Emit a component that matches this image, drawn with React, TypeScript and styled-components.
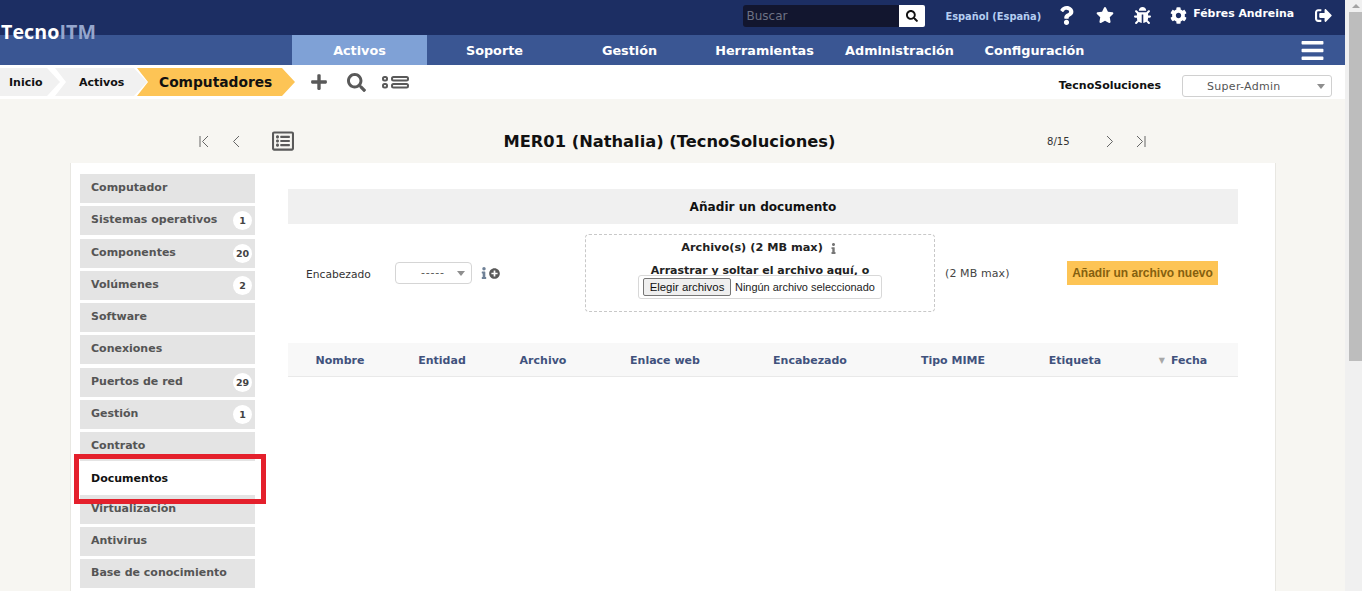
import React from "react";
import styled, { createGlobalStyle } from "styled-components";
import { FaQuestion, FaStar, FaBug, FaCog, FaSignOutAlt, FaBars, FaPlus, FaSearch, FaInfo, FaPlusCircle, FaRegListAlt } from "react-icons/fa";

const Global = createGlobalStyle`
  html, body { margin: 0; padding: 0; height: 100%; overflow: hidden; }
  body { font-family: "DejaVu Sans", Verdana, sans-serif; background: #f7f6f2; }
  #root { height: 100%; }
`;

const Shell = styled.div`
  display: flex;
  width: 1362px;
  height: 591px;
  overflow: hidden;
  position: relative;
`;
const Page = styled.div`
  width: 1345px;
  flex: none;
  display: flex;
  flex-direction: column;
  background: #f7f6f2;
`;
const ScrollTrack = styled.div`
  width: 17px;
  flex: none;
  background: #f0f0f0;
  display: flex;
  flex-direction: column;
  align-items: flex-end;
`;
const ScrollArrow = styled.div`
  height: 12px;
  width: 13px;
  display: flex;
  align-items: center;
  justify-content: center;
  &::before {
    content: "";
    border-left: 4px solid transparent;
    border-right: 4px solid transparent;
    border-bottom: 4px solid #a3a3a3;
  }
`;
const ScrollThumb = styled.div`
  width: 13px;
  height: 349px;
  background: #bdbdbd;
`;

const TopBar = styled.header`
  height: 35px;
  background: #1c2e63;
  display: flex;
  align-items: center;
  justify-content: flex-end;
  color: #fff;
  padding-right: 13px;
`;
const SearchBox = styled.div`
  display: flex;
  width: 182px;
  height: 22px;
  margin-right: 20px;
  margin-top: -3px;
`;
const SearchInput = styled.div`
  flex: 1;
  background: #12162f;
  color: #6d7284;
  font-size: 12px;
  line-height: 22px;
  padding-left: 3px;
  border-radius: 3px 0 0 3px;
`;
const SearchButton = styled.div`
  width: 26px;
  flex: none;
  background: #fff;
  color: #111;
  display: flex;
  align-items: center;
  justify-content: center;
  font-size: 12px;
  border-radius: 0 2px 2px 0;
`;
const Lang = styled.span`
  font-size: 9.85px;
  font-weight: 700;
  color: #b4cdf1;
  margin-right: 16px;
  white-space: nowrap;
  margin-top: -3px;
`;
const TopIcon = styled.span<{ $mr: number; $size: number }>`
  display: inline-flex;
  font-size: ${(p) => p.$size}px;
  margin-right: ${(p) => p.$mr}px;
  margin-top: -5px;
  color: #fff;
`;
const UserName = styled.span`
  font-size: 10.9px;
  font-weight: 700;
  margin-right: 21px;
  margin-top: -9px;
  white-space: nowrap;
`;

const NavBar = styled.nav`
  height: 30px;
  background: #3a5693;
  display: flex;
  padding-left: 292px;
  padding-right: 20px;
  position: relative;
`;
const NavItem = styled.div<{ $active?: boolean }>`
  width: 135px;
  flex: none;
  text-align: center;
  line-height: 31px;
  font-size: 12.8px;
  font-weight: 700;
  color: #fff;
  background: ${(p) => (p.$active ? "#7fa1d6" : "transparent")};
  white-space: nowrap;
`;
const Burger = styled.div`
  margin-left: auto;
  color: #fff;
  font-size: 25px;
  display: flex;
  align-items: center;
`;
const Logo = styled.div`
  position: absolute;
  left: 1px;
  top: -14px;
  font-family: "Open Sans", sans-serif;
  font-size: 19.6px;
  font-weight: 700;
  line-height: 22px;
  color: #fff;
  letter-spacing: 0.1px;
  & > span { color: #95a6cd; }
`;

const CrumbBar = styled.div`
  height: 34px;
  background: #fff;
  display: flex;
  align-items: flex-start;
  padding-top: 3px;
  box-sizing: border-box;
`;
const Crumb = styled.div<{ $w: number; $overlap: number; $first?: boolean; $current?: boolean }>`
  width: ${(p) => p.$w}px;
  height: 28px;
  flex: none;
  margin-right: ${(p) => -p.$overlap}px;
  background: ${(p) => (p.$current ? "#fdc455" : "#f1f1f1")};
  clip-path: ${(p) =>
    p.$first
      ? "polygon(0 0, calc(100% - 13px) 0, 100% 50%, calc(100% - 13px) 100%, 0 100%)"
      : "polygon(0 0, calc(100% - 13px) 0, 100% 50%, calc(100% - 13px) 100%, 0 100%, 11px 50%)"};
  display: flex;
  align-items: center;
  padding-left: ${(p) => (p.$first ? 9 : p.$current ? 22 : 24)}px;
  box-sizing: border-box;
  font-size: ${(p) => (p.$current ? 13.8 : 11)}px;
  font-weight: 700;
  color: #111;
  white-space: nowrap;
`;
const ActionIcon = styled.span<{ $ml: number; $size: number; $mt: number }>`
  display: inline-flex;
  color: #595959;
  font-size: ${(p) => p.$size}px;
  margin-left: ${(p) => p.$ml}px;
  margin-top: ${(p) => p.$mt}px;
`;
const Entity = styled.span`
  margin-left: auto;
  margin-right: 21px;
  margin-top: 11px;
  font-size: 11px;
  font-weight: 700;
  color: #111;
`;
const Profile = styled.div`
  width: 124px;
  height: 20px;
  margin-right: 13px;
  margin-top: 7px;
  border: 1px solid #d0d0d0;
  border-radius: 3px;
  font-size: 11px;
  color: #555;
  display: flex;
  align-items: center;
  padding-left: 24px;
  position: relative;
  letter-spacing: 0.3px;
`;
const Caret = styled.i`
  position: absolute;
  right: 6px;
  top: 50%;
  margin-top: -2px;
  border-left: 4px solid transparent;
  border-right: 4px solid transparent;
  border-top: 5px solid #8e8e8e;
`;

const TitleRow = styled.div`
  height: 64px;
  box-sizing: border-box;
  padding-top: 20px;
  display: flex;
  align-items: center;
  padding-left: 199px;
  color: #6b6b6b;
`;
const Pager = styled.svg<{ $mr: number }>`
  width: 11px;
  height: 13px;
  margin-right: ${(p) => p.$mr}px;
  flex: none;
  fill: none;
  stroke: #666;
  stroke-width: 1;
`;
const ListIcon = styled.span`
  display: inline-flex;
  font-size: 22px;
  color: #5a5a5a;
`;
const Title = styled.h1`
  width: 751px;
  flex: none;
  margin: 0;
  text-align: center;
  font-size: 16.3px;
  font-weight: 700;
  color: #111;
  white-space: nowrap;
`;
const Count = styled.span`
  width: 57px;
  margin-left: 2px;
  font-size: 10.1px;
  color: #333;
  flex: none;
`;

const Card = styled.main`
  width: 1206px;
  margin-left: 70px;
  flex: 1;
  min-height: 0;
  background: #fff;
  border-left: 1px solid #e8e7e2;
  border-right: 1px solid #e8e7e2;
  box-sizing: border-box;
  display: flex;
  overflow: hidden;
  padding: 11px 0 0 9px;
`;
const Tabs = styled.ul`
  list-style: none;
  margin: 0;
  padding: 0;
  width: 175px;
  flex: none;
`;
const Tab = styled.li<{ $active?: boolean }>`
  height: 29px;
  margin-bottom: ${(p) => (p.$active ? 1.25 : 3.25)}px;
  background: ${(p) => (p.$active ? "#fff" : "#e4e4e4")};
  color: ${(p) => (p.$active ? "#111" : "#555")};
  font-size: 11px;
  font-weight: 700;
  padding: ${(p) => (p.$active ? 8 : 7)}px 0 0 11px;
  box-sizing: border-box;
  position: relative;
  white-space: nowrap;
  line-height: 14px;
`;
const Badge = styled.span`
  position: absolute;
  right: 3px;
  top: 5px;
  width: 19px;
  height: 19px;
  border-radius: 50%;
  background: #fff;
  color: #444;
  font-size: 9.5px;
  text-align: center;
  line-height: 19px;
`;
const Content = styled.section`
  width: 950px;
  margin-left: 33px;
  margin-top: 15px;
  flex: none;
`;
const FormHead = styled.div`
  height: 35px;
  background: #f0f0f0;
  font-size: 12.1px;
  font-weight: 700;
  color: #111;
  text-align: center;
  line-height: 36px;
`;
const FormRow = styled.div`
  display: flex;
  align-items: center;
  height: 98px;
  padding: 10px 0;
  box-sizing: border-box;
`;
const FieldLabel = styled.span`
  margin-left: 18px;
  width: 89px;
  flex: none;
  font-size: 10.7px;
  color: #333;
  margin-top: 2px;
`;
const Select = styled.div`
  width: 77px;
  height: 22px;
  flex: none;
  border: 1px solid #d5d5d5;
  border-radius: 4px;
  position: relative;
  font-size: 11px;
  color: #555;
  padding-left: 25px;
  box-sizing: border-box;
  line-height: 20px;
  letter-spacing: 0.8px;
`;
const InfoIcons = styled.span`
  display: inline-flex;
  align-items: center;
  margin-left: 6px;
  width: 107px;
  flex: none;
  color: #6f8197;
  font-size: 12px;
`;
const PlusIcon = styled.span`
  display: inline-flex;
  color: #5a5a5a;
  font-size: 11px;
  margin-left: -1px;
`;
const DropZone = styled.div`
  width: 350px;
  height: 78px;
  flex: none;
  border: 1px dashed #c8c8c8;
  border-radius: 4px;
  box-sizing: border-box;
  display: flex;
  flex-direction: column;
  align-items: center;
  padding-top: 6px;
  color: #222;
`;
const DropTitle = styled.div`
  font-size: 11.3px;
  font-weight: 700;
  line-height: 14px;
  display: flex;
  align-items: center;
  gap: 5px;
  color: #222;
`;
const MiniInfo = styled.span`
  display: inline-flex;
  color: #777;
  font-size: 11px;
`;
const DropHint = styled.div`
  font-size: 11px;
  font-weight: 700;
  line-height: 14px;
  margin-top: 9px;
`;
const FileBox = styled.div`
  width: 244px;
  height: 24px;
  border: 1px solid #d8d8d8;
  border-radius: 3px;
  display: flex;
  align-items: center;
  box-sizing: border-box;
  padding-left: 4px;
  margin-top: -3px;
  font-family: "Liberation Sans", Arial, sans-serif;
  font-size: 10.95px;
  color: #222;
  white-space: nowrap;
`;
const FileButton = styled.span`
  height: 18px;
  width: 88px;
  flex: none;
  margin-right: 4px;
  box-sizing: border-box;
  border: 1px solid #767676;
  border-radius: 2px;
  background: #efefef;
  text-align: center;
  line-height: 16px;
  color: #111;
  font-size: 11.4px;
`;
const MaxNote = styled.span`
  margin-left: 10px;
  width: 122px;
  flex: none;
  font-size: 11px;
  color: #444;
  letter-spacing: 0.1px;
`;
const AddButton = styled.div`
  width: 151px;
  height: 24px;
  flex: none;
  background: #fdc455;
  color: #85600f;
  font-family: "Liberation Sans", Arial, sans-serif;
  font-size: 12px;
  font-weight: 700;
  text-align: center;
  line-height: 24px;
  white-space: nowrap;
`;
const TableHead = styled.div`
  display: grid;
  grid-template-columns: 104px 100px 102px 142px 148px 138px 106px 110px;
  height: 34px;
  margin-top: 21px;
  background: #f8f8f8;
  border-bottom: 1px solid #e9e9e9;
  box-sizing: border-box;
`;
const Col = styled.div`
  font-size: 11px;
  font-weight: 700;
  color: #41527d;
  text-align: center;
  line-height: 35px;
  white-space: nowrap;
`;
const SortMark = styled.span`
  color: #a8a8a8;
  font-size: 8px;
  margin-right: 6px;
  vertical-align: 1px;
  font-weight: 400;
`;
const Annotation = styled.div`
  position: absolute;
  left: 74px;
  top: 454px;
  width: 192px;
  height: 50px;
  border: 5px solid #e4202c;
  box-sizing: border-box;
  pointer-events: none;
`;

const tabs: [string, string?][] = [
  ["Computador"],
  ["Sistemas operativos", "1"],
  ["Componentes", "20"],
  ["Volúmenes", "2"],
  ["Software"],
  ["Conexiones"],
  ["Puertos de red", "29"],
  ["Gestión", "1"],
  ["Contrato"],
  ["Documentos"],
  ["Virtualización"],
  ["Antivirus"],
  ["Base de conocimiento"],
];

const PagerIcon = ({ d, mr }: { d: string; mr: number }) => (
  <Pager $mr={mr} viewBox="0 0 11 13">
    <path d={d} />
  </Pager>
);

export default function App() {
  return (
    <Shell>
      <Global />
      <Page>
        <TopBar>
          <SearchBox>
            <SearchInput>Buscar</SearchInput>
            <SearchButton><FaSearch /></SearchButton>
          </SearchBox>
          <Lang>Español (España)</Lang>
          <TopIcon $mr={20} $size={19}><FaQuestion /></TopIcon>
          <TopIcon $mr={20} $size={18}><FaStar /></TopIcon>
          <TopIcon $mr={19} $size={17}><FaBug /></TopIcon>
          <TopIcon $mr={6} $size={17}><FaCog /></TopIcon>
          <UserName>Fébres Andreina</UserName>
          <TopIcon $mr={0} $size={17}><FaSignOutAlt /></TopIcon>
        </TopBar>
        <NavBar>
          <Logo>Tecno<span>ITM</span></Logo>
          <NavItem $active>Activos</NavItem>
          <NavItem>Soporte</NavItem>
          <NavItem>Gestión</NavItem>
          <NavItem>Herramientas</NavItem>
          <NavItem>Administración</NavItem>
          <NavItem>Configuración</NavItem>
          <Burger><FaBars /></Burger>
        </NavBar>
        <CrumbBar>
          <Crumb $first $w={60} $overlap={5}>Inicio</Crumb>
          <Crumb $w={92} $overlap={10}>Activos</Crumb>
          <Crumb $current $w={158} $overlap={0}>Computadores</Crumb>
          <ActionIcon $ml={15} $size={18} $mt={5}><FaPlus /></ActionIcon>
          <ActionIcon $ml={19} $size={19} $mt={5}><FaSearch /></ActionIcon>
          <ActionIcon $ml={16} $size={0} $mt={8}>
            <svg width="27" height="13" viewBox="0 0 27 13" fill="none" stroke="#595959" strokeWidth="2">
              <rect x="1" y="1" width="4" height="3.5" rx="1.5" />
              <rect x="1" y="8" width="4" height="3.5" rx="1.5" />
              <rect x="10" y="1" width="16" height="3.5" rx="1.5" />
              <rect x="10" y="8" width="16" height="3.5" rx="1.5" />
            </svg>
          </ActionIcon>
          <Entity>TecnoSoluciones</Entity>
          <Profile>Super-Admin<Caret /></Profile>
        </CrumbBar>
        <TitleRow>
          <PagerIcon d="M1 1V12M9 1L3.5 6.5L9 12" mr={21} />
          <PagerIcon d="M8 1L2.5 6.5L8 12" mr={30} />
          <ListIcon><FaRegListAlt /></ListIcon>
          <Title>MER01 (Nathalia) (TecnoSoluciones)</Title>
          <Count>8/15</Count>
          <PagerIcon d="M3 1L8.5 6.5L3 12" mr={20} />
          <PagerIcon d="M10 1V12M2 1L7.5 6.5L2 12" mr={0} />
        </TitleRow>
        <Card>
          <Tabs>
            {tabs.map(([name, n]) => (
              <Tab key={name} $active={name === "Documentos"}>
                {name}
                {n && <Badge>{n}</Badge>}
              </Tab>
            ))}
          </Tabs>
          <Content>
            <FormHead>Añadir un documento</FormHead>
            <FormRow>
              <FieldLabel>Encabezado</FieldLabel>
              <Select>-----<Caret /></Select>
              <InfoIcons>
                <FaInfo />
                <PlusIcon><FaPlusCircle /></PlusIcon>
              </InfoIcons>
              <DropZone>
                <DropTitle>Archivo(s) (2 MB max)<MiniInfo><FaInfo /></MiniInfo></DropTitle>
                <DropHint>Arrastrar y soltar el archivo aquí, o</DropHint>
                <FileBox>
                  <FileButton>Elegir archivos</FileButton>
                  Ningún archivo seleccionado
                </FileBox>
              </DropZone>
              <MaxNote>(2 MB max)</MaxNote>
              <AddButton>Añadir un archivo nuevo</AddButton>
            </FormRow>
            <TableHead>
              <Col>Nombre</Col>
              <Col>Entidad</Col>
              <Col>Archivo</Col>
              <Col>Enlace web</Col>
              <Col>Encabezado</Col>
              <Col>Tipo MIME</Col>
              <Col>Etiqueta</Col>
              <Col><SortMark>▼</SortMark>Fecha</Col>
            </TableHead>
          </Content>
        </Card>
      </Page>
      <ScrollTrack>
        <ScrollArrow />
        <ScrollThumb />
      </ScrollTrack>
      <Annotation />
    </Shell>
  );
}
